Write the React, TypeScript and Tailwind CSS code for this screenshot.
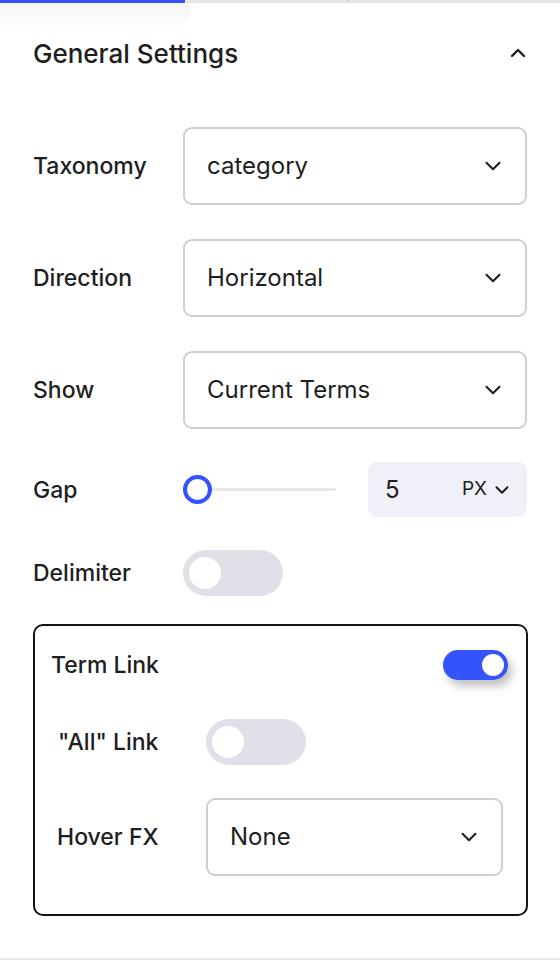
import { ChevronDown, ChevronUp } from "lucide-react";

const font = { fontFamily: "Inter, 'Noto Sans', sans-serif" };

const SelectBox = ({ value, width = "w-[344px]" }: { value: string; width?: string }) => (
  <div
    className={`${width} h-[78px] rounded-[9px] border-2 border-[#cfcfcf] bg-white flex items-center justify-between pl-[22px] pr-[19px]`}
  >
    <span className="text-[24px] text-[#1e1e1e]">{value}</span>
    <ChevronDown className="w-[26px] h-[26px] text-[#1e1e1e]" strokeWidth={1.9} />
  </div>
);

const Toggle = ({ on = false }: { on?: boolean }) =>
  on ? (
    <div className="w-[65px] h-[30px] rounded-full bg-[#3453fb] flex items-center justify-end pr-[4px] shadow-[4px_6px_8px_rgba(0,0,0,0.25)]">
      <div className="w-[22px] h-[22px] rounded-full bg-white" />
    </div>
  ) : (
    <div className="w-[100px] h-[46px] rounded-full bg-[#e0e1e8] flex items-center pl-[6px]">
      <div className="w-[32px] h-[32px] rounded-full bg-white" />
    </div>
  );

const Row = ({ label, children }: { label: string; children: React.ReactNode }) => (
  <div className="flex items-center">
    <div className="w-[150px] text-[23px] leading-[28px] font-medium text-[#1e1e1e]">{label}</div>
    {children}
  </div>
);

export default function App() {
  return (
    <div className="w-[560px] h-[960px] bg-white flex flex-col" style={font}>
      <div className="relative flex h-[3px]">
        <div className="w-[185px] h-[3px] bg-[#3453fb]" />
        <div className="flex-1 h-[3px] bg-[#e6e6e6] flex">
          <div className="w-[162px]" />
          <div className="w-[2px] h-[3px] bg-[#d4d4d4]" />
        </div>
        <div className="absolute left-0 top-[3px] w-[190px] h-[28px] rounded-br-[20px] bg-gradient-to-b from-[#f5f5f5] to-white" />
      </div>

      <div className="relative flex-1 px-[33px] flex flex-col">
        <div className="mt-[24px] h-[52px] flex items-center justify-between">
          <h2 className="text-[26px] font-medium text-[#1e1e1e]">General Settings</h2>
          <ChevronUp className="w-[24px] h-[24px] text-[#1e1e1e] mr-[-3px]" strokeWidth={2.4} />
        </div>

        <div className="mt-[48px] flex flex-col gap-[34px]">
          <Row label="Taxonomy">
            <SelectBox value="category" />
          </Row>
          <Row label="Direction">
            <SelectBox value="Horizontal" />
          </Row>
          <Row label="Show">
            <SelectBox value="Current Terms" />
          </Row>
        </div>

        <div className="mt-[33px]">
          <Row label="Gap">
            <div className="w-[185px] flex items-center">
              <div className="w-[29px] h-[29px] rounded-full border-[4px] border-[#3453fb] bg-white" />
              <div className="w-[124px] h-[3px] bg-[#e8e8e8] rounded-full" />
            </div>
            <div className="w-[159px] h-[55px] rounded-[9px] bg-[#f0f0f8] flex items-center pl-[17px] pr-[14px]">
              <span className="text-[24px] text-[#1e1e1e] flex-1">5</span>
              <span className="text-[19px] text-[#1e1e1e] mr-[4px]">PX</span>
              <ChevronDown className="w-[22px] h-[22px] text-[#1e1e1e]" strokeWidth={2.2} />
            </div>
          </Row>
        </div>

        <div className="mt-[33px]">
          <Row label="Delimiter">
            <Toggle />
          </Row>
        </div>

        <div className="mt-[28px] w-[495px] rounded-[10px] border-2 border-[#141414] pl-[16px] pr-[18px] pt-[24px] pb-[38px]">
          <div className="h-[30px] flex items-center justify-between">
            <span className="text-[23px] leading-[28px] font-medium text-[#1e1e1e]">Term Link</span>
            <Toggle on />
          </div>
          <div className="mt-[39px] flex items-center pl-[7px]">
            <span className="w-[148px] text-[23px] leading-[28px] font-medium text-[#1e1e1e]">"All" Link</span>
            <Toggle />
          </div>
          <div className="mt-[33px] flex items-center pl-[6px]">
            <span className="w-[149px] text-[23px] leading-[28px] font-medium text-[#1e1e1e]">Hover FX</span>
            <SelectBox value="None" width="w-[297px]" />
          </div>
        </div>
      </div>

      <div className="h-[2px] bg-[#e6e6e6]" />
    </div>
  );
}
